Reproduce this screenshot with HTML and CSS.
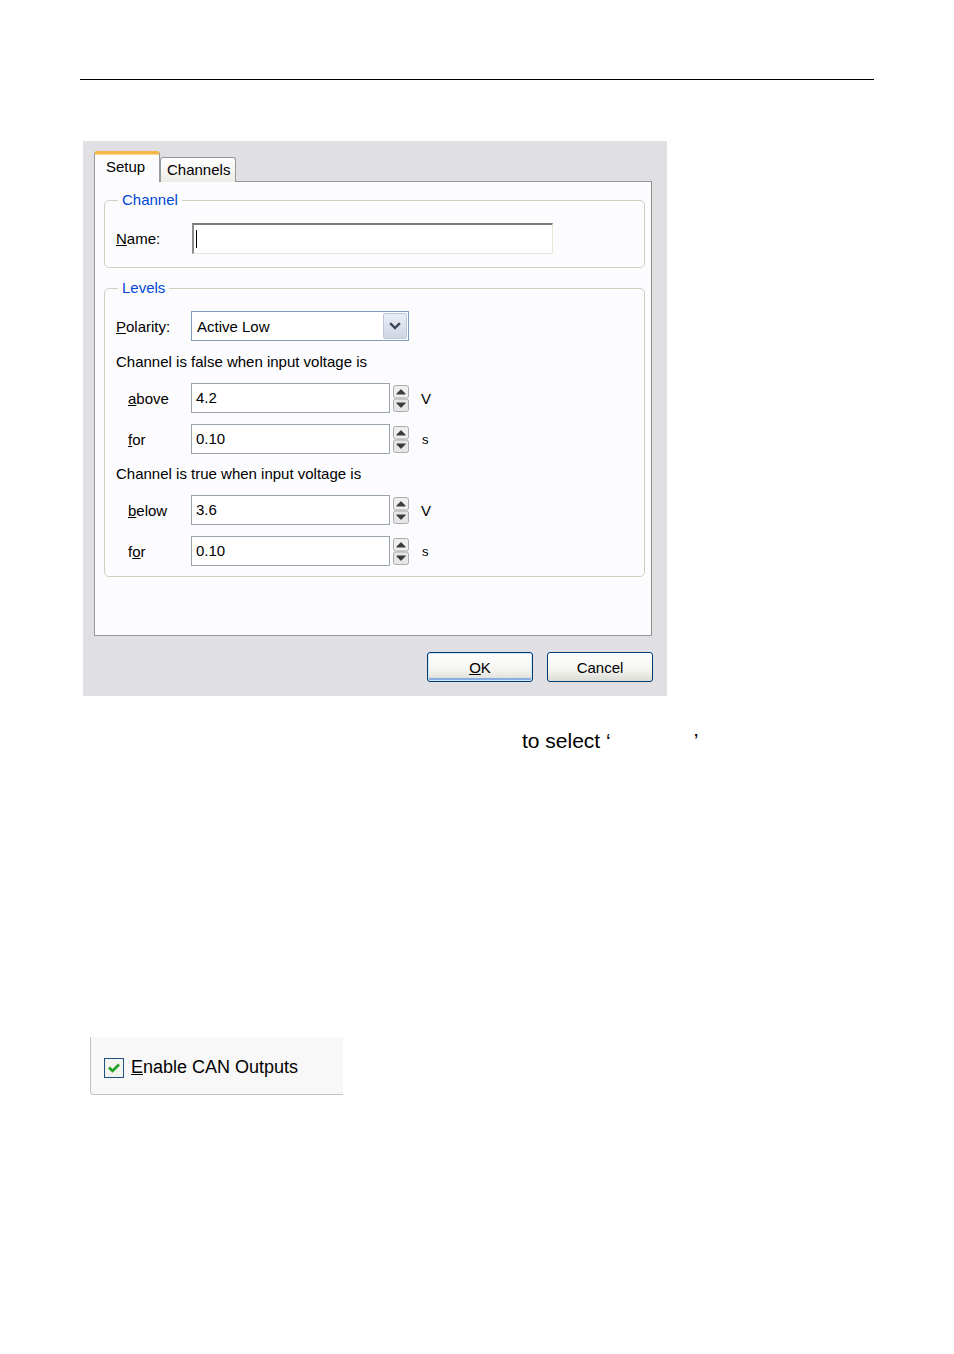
FILE: index.html
```html
<!DOCTYPE html>
<html>
<head>
<meta charset="utf-8">
<link rel="stylesheet" href="styles.css">
</head>
<body>
<div class="page">
  <div class="rule"></div>

  <div class="dialog">
    <div class="tabs">
      <div class="tab tab-active">Setup</div>
      <div class="tab">Channels</div>
    </div>
    <div class="panel">
      <fieldset class="group group-channel">
        <legend>Channel</legend>
        <div class="row">
          <span class="label label-name"><u>N</u>ame:</span>
          <div class="textbox-name"><span class="caret"></span></div>
        </div>
      </fieldset>

      <fieldset class="group group-levels">
        <legend>Levels</legend>
        <div class="row">
          <span class="label label-polarity"><u>P</u>olarity:</span>
          <div class="combo">
            <span class="combo-text">Active Low</span>
            <span class="combo-btn">
              <svg width="14" height="10" viewBox="0 0 14 10"><path d="M3 3 L7 7 L11 3" fill="none" stroke="#3c4658" stroke-width="2.4" stroke-linecap="square"/></svg>
            </span>
          </div>
        </div>
        <div class="text-row">Channel is false when input voltage is</div>
        <div class="row spin-row">
          <span class="label label-spin"><u>a</u>bove</span>
          <div class="spinbox">4.2</div>
          <svg class="spinner" width="16" height="27" viewBox="0 0 16 27">
            <rect x="0.5" y="0.5" width="15" height="12.5" rx="2" fill="#eeeeee" stroke="#a9acb0"/>
            <rect x="0.5" y="14" width="15" height="12.5" rx="2" fill="#e6e6e6" stroke="#a9acb0"/>
            <path d="M4 9 L8 5 L12 9 Z" fill="#3c3c3c" stroke="#3c3c3c" stroke-width="1.2" stroke-linejoin="round"/>
            <path d="M4 18 L8 22 L12 18 Z" fill="#3c3c3c" stroke="#3c3c3c" stroke-width="1.2" stroke-linejoin="round"/>
          </svg>
          <span class="unit">V</span>
        </div>
        <div class="row spin-row gap-row">
          <span class="label label-spin"><u>f</u>or</span>
          <div class="spinbox">0.10</div>
          <svg class="spinner" width="16" height="27" viewBox="0 0 16 27">
            <rect x="0.5" y="0.5" width="15" height="12.5" rx="2" fill="#eeeeee" stroke="#a9acb0"/>
            <rect x="0.5" y="14" width="15" height="12.5" rx="2" fill="#e6e6e6" stroke="#a9acb0"/>
            <path d="M4 9 L8 5 L12 9 Z" fill="#3c3c3c" stroke="#3c3c3c" stroke-width="1.2" stroke-linejoin="round"/>
            <path d="M4 18 L8 22 L12 18 Z" fill="#3c3c3c" stroke="#3c3c3c" stroke-width="1.2" stroke-linejoin="round"/>
          </svg>
          <span class="unit unit-s">s</span>
        </div>
        <div class="text-row text-row-2">Channel is true when input voltage is</div>
        <div class="row spin-row">
          <span class="label label-spin"><u>b</u>elow</span>
          <div class="spinbox">3.6</div>
          <svg class="spinner" width="16" height="27" viewBox="0 0 16 27">
            <rect x="0.5" y="0.5" width="15" height="12.5" rx="2" fill="#eeeeee" stroke="#a9acb0"/>
            <rect x="0.5" y="14" width="15" height="12.5" rx="2" fill="#e6e6e6" stroke="#a9acb0"/>
            <path d="M4 9 L8 5 L12 9 Z" fill="#3c3c3c" stroke="#3c3c3c" stroke-width="1.2" stroke-linejoin="round"/>
            <path d="M4 18 L8 22 L12 18 Z" fill="#3c3c3c" stroke="#3c3c3c" stroke-width="1.2" stroke-linejoin="round"/>
          </svg>
          <span class="unit">V</span>
        </div>
        <div class="row spin-row gap-row">
          <span class="label label-spin">f<u>o</u>r</span>
          <div class="spinbox">0.10</div>
          <svg class="spinner" width="16" height="27" viewBox="0 0 16 27">
            <rect x="0.5" y="0.5" width="15" height="12.5" rx="2" fill="#eeeeee" stroke="#a9acb0"/>
            <rect x="0.5" y="14" width="15" height="12.5" rx="2" fill="#e6e6e6" stroke="#a9acb0"/>
            <path d="M4 9 L8 5 L12 9 Z" fill="#3c3c3c" stroke="#3c3c3c" stroke-width="1.2" stroke-linejoin="round"/>
            <path d="M4 18 L8 22 L12 18 Z" fill="#3c3c3c" stroke="#3c3c3c" stroke-width="1.2" stroke-linejoin="round"/>
          </svg>
          <span class="unit unit-s">s</span>
        </div>
      </fieldset>
    </div>
    <div class="buttons">
      <div class="btn btn-default"><u>O</u>K</div>
      <div class="btn">Cancel</div>
    </div>
  </div>

  <p class="sentence">to select ‘<span class="blank"></span>’</p>

  <div class="checkbox-shot">
    <span class="checkbox">
      <svg width="20" height="20" viewBox="0 0 20 20">
        <rect x="0.5" y="0.5" width="19" height="19" fill="#f4f4ef" stroke="#1c5180"/>
        <path d="M5 9.5 L8.5 13 L15 6.5" fill="none" stroke="#21a121" stroke-width="2.6"/>
      </svg>
    </span>
    <span class="check-label"><u>E</u>nable CAN Outputs</span>
  </div>
</div>
</body>
</html>
```

FILE: styles.css
```css
html, body {
  margin: 0;
  padding: 0;
  background: #ffffff;
}

.page {
  padding: 79px 80px 0 80px;
  font-family: "Liberation Sans", Arial, sans-serif;
}

.rule {
  height: 1px;
  background: #000000;
  width: 794px;
}

.dialog {
  margin-top: 61px;
  margin-left: 3px;
  width: 584px;
  height: 555px;
  box-sizing: border-box;
  background: #e0dfe3;
  padding: 11px 15px 0 11px;
  font-size: 15px;
  color: #000000;
}

.tabs {
  display: flex;
  align-items: flex-end;
  height: 30px;
  position: relative;
  z-index: 1;
  margin-bottom: -1px;
}

.tab {
  box-sizing: border-box;
  height: 25px;
  width: 76px;
  border: 1px solid #919b9c;
  border-bottom: none;
  border-radius: 3px 3px 0 0;
  background: linear-gradient(#ffffff, #ecebe6);
  padding-left: 6px;
  line-height: 24px;
}

.tab-active {
  width: 66px;
  height: 31px;
  background: #fcfcfe;
  border-top: 3px solid #f4b74a;
  box-shadow: inset 0 1px 0 #ffd88c;
  padding-left: 11px;
  line-height: 26px;
}

.panel {
  box-sizing: border-box;
  height: 455px;
  border: 1px solid #919b9c;
  border-right-color: #8a9383;
  background: #fcfcfe;
  padding: 0 6px 0 9px;
  overflow: hidden;
}

.group {
  margin: 0;
  min-width: 0;
  border: 1px solid #d0d0bf;
  border-radius: 5px;
}

.group legend {
  color: #0046d5;
  line-height: 18px;
  padding: 0 4px;
  margin-left: 2px;
}

.group-channel {
  margin-top: 9px;
  padding: 14px 11px 13px 11px;
}

.group-levels {
  margin-top: 11px;
  padding: 14px 11px 10px 11px;
}

.row {
  display: flex;
  align-items: center;
  height: 30px;
}

.group-channel .row {
  height: 31px;
}

.label-name {
  width: 76px;
}

.label-polarity {
  width: 75px;
}

.textbox-name {
  box-sizing: border-box;
  width: 361px;
  height: 31px;
  background: #ffffff;
  border-top: 2px solid #7b7b7b;
  border-left: 2px solid #8c8c8c;
  border-right: 1px solid #e9e8d8;
  border-bottom: 1px solid #e9e8d8;
  display: flex;
  align-items: center;
  padding-left: 2px;
}

.caret {
  display: inline-block;
  width: 1px;
  height: 18px;
  background: #000000;
}

.combo {
  box-sizing: border-box;
  width: 218px;
  height: 30px;
  border: 1px solid #7f9db9;
  background: #ffffff;
  display: flex;
  align-items: center;
  padding: 1px;
}

.combo-text {
  flex: 1;
  padding-left: 4px;
}

.combo-btn {
  box-sizing: border-box;
  width: 24px;
  height: 26px;
  border: 1px solid #bcc7dc;
  border-radius: 2px;
  background: linear-gradient(#e9edf5, #cfd6e4);
  display: flex;
  align-items: center;
  justify-content: center;
}

.text-row {
  margin-top: 11px;
  line-height: 20px;
  height: 20px;
}

.text-row-2 {
  margin-top: 10px;
}

.spin-row {
  margin-top: 11px;
}

.label-spin {
  width: 63px;
  padding-left: 12px;
}

.spinbox {
  box-sizing: border-box;
  width: 199px;
  height: 30px;
  border: 1px solid #9aa4ad;
  background: #ffffff;
  padding-left: 4px;
  line-height: 28px;
}

.spinner {
  margin-left: 3px;
  display: block;
}

.unit {
  margin-left: 12px;
}

.unit-s {
  font-size: 13px;
  margin-left: 13px;
}

.buttons {
  display: flex;
  justify-content: flex-end;
  gap: 14px;
  margin-top: 16px;
  margin-right: -1px;
}

.btn {
  box-sizing: border-box;
  width: 106px;
  height: 30px;
  border: 1px solid #003c74;
  border-radius: 3px;
  background: linear-gradient(#ffffff 0%, #f4f4f0 60%, #dcdcd6 100%);
  text-align: center;
  line-height: 29px;
}

.btn-default {
  box-shadow: inset 0 0 0 1px #cee7ff, inset 0 -2px 0 1px #89ade4;
}

.sentence {
  margin: 33px 0 0 442px;
  font-size: 21px;
  line-height: 24px;
  color: #000000;
}

.blank {
  display: inline-block;
  width: 83px;
}

.checkbox-shot {
  margin-top: 284px;
  margin-left: 10px;
  box-sizing: border-box;
  width: 253px;
  height: 58px;
  background: #f8f8f8;
  border-left: 1px solid #c5c5bd;
  border-bottom: 1px solid #c5c5bd;
  border-bottom-left-radius: 4px;
  display: flex;
  align-items: center;
  padding-left: 13px;
  padding-top: 4px;
  font-size: 18px;
}

.checkbox {
  display: flex;
  width: 20px;
  height: 20px;
}

.check-label {
  margin-left: 7px;
}
```
